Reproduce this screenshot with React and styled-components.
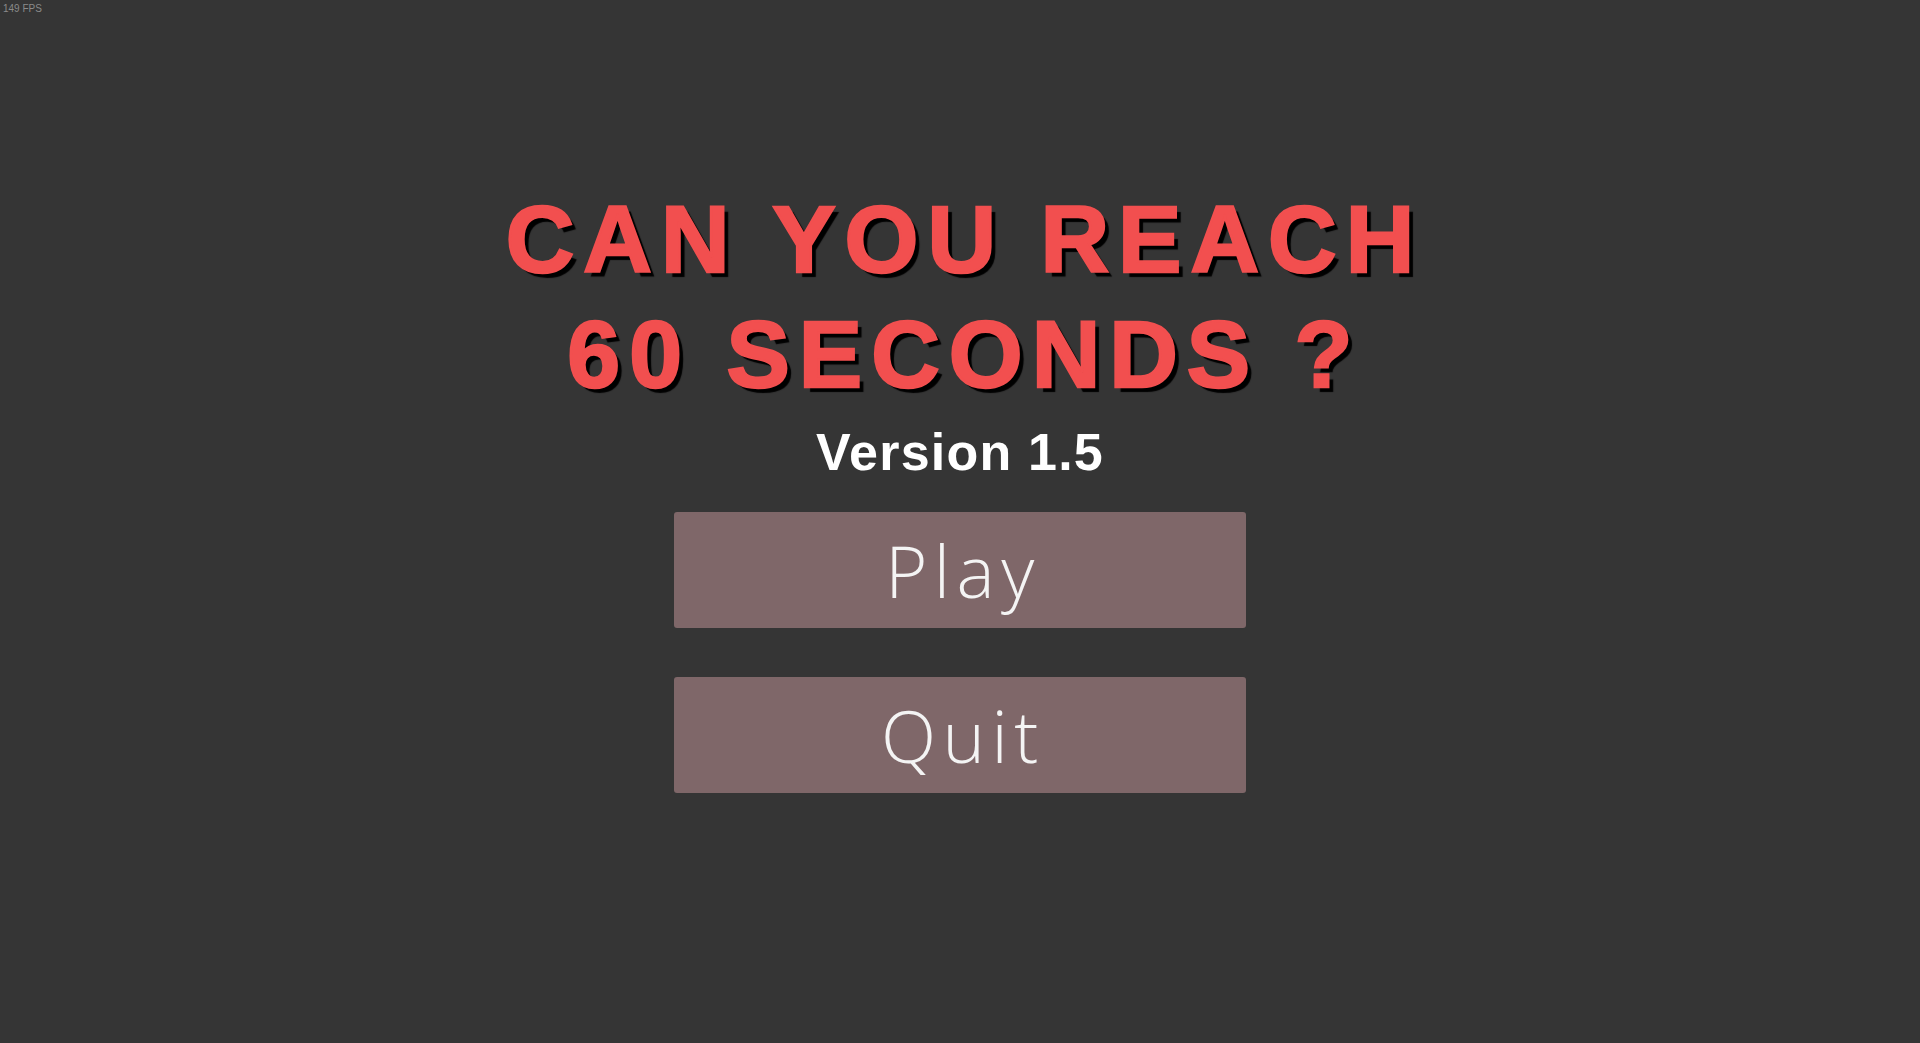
import styled, { createGlobalStyle } from 'styled-components';

const Global = createGlobalStyle`
  html, body {
    margin: 0;
    padding: 0;
    background: #353535;
  }
  #root {
    min-height: 100vh;
  }
`;

const Screen = styled.div`
  position: relative;
  width: 100%;
  height: 100vh;
  background: #353535;
  display: flex;
  flex-direction: column;
  align-items: center;
  padding-top: 182px;
  box-sizing: border-box;
  font-family: "Liberation Sans", Arial, sans-serif;
`;

const Fps = styled.div`
  position: absolute;
  top: 3px;
  left: 3px;
  font-size: 10px;
  color: #8a8a8a;
  font-family: "Liberation Sans", Arial, sans-serif;
`;

const Title = styled.h1`
  margin: 0;
  padding-left: 9px;
  font-size: 95px;
  line-height: 115px;
  font-weight: 700;
  letter-spacing: 9px;
  text-align: center;
  color: #f24f4f;
  -webkit-text-stroke: 2.5px #f24f4f;
  text-shadow: 5px 5px 1px #000;
`;

const Version = styled.div`
  margin-top: 10px;
  font-size: 52px;
  line-height: 60px;
  font-weight: 700;
  letter-spacing: 1.2px;
  color: #ffffff;
`;

const Menu = styled.div`
  margin-top: 30px;
  display: flex;
  flex-direction: column;
  gap: 49px;
`;

const MenuButton = styled.button`
  width: 572px;
  height: 116px;
  border: none;
  border-radius: 3px;
  background: #7f6769;
  color: #f4f4f4;
  font-family: "Open Sans", "Liberation Sans", sans-serif;
  font-weight: 300;
  font-size: 72px;
  letter-spacing: 6.5px;
  padding: 0 0 0 6px;
  display: flex;
  align-items: center;
  justify-content: center;
  cursor: pointer;
`;

export default function App() {
  return (
    <>
      <Global />
      <Screen>
        <Fps>149 FPS</Fps>
        <Title>
          CAN YOU REACH
          <br />
          60 SECONDS ?
        </Title>
        <Version>Version 1.5</Version>
        <Menu>
          <MenuButton>Play</MenuButton>
          <MenuButton>Quit</MenuButton>
        </Menu>
      </Screen>
    </>
  );
}
